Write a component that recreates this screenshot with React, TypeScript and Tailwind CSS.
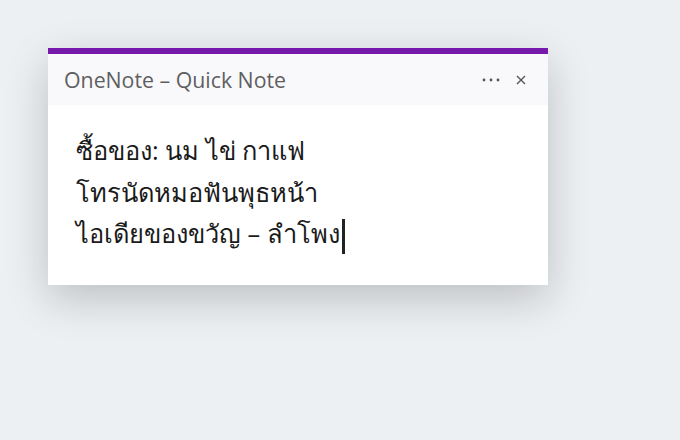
import React from "react";

export default function App() {
  return (
    <div className="w-[680px] h-[440px] bg-[#edf0f3] pt-[48px] pl-[48px]" style={{ fontFamily: '"Segoe UI", "Open Sans", "Noto Sans", sans-serif' }}>
      <div className="w-[500px] bg-white shadow-[0_14px_40px_rgba(0,0,0,0.2)] flex flex-col">
        <div className="h-[6px] bg-[#7719aa]" />
        <div className="h-[51px] bg-[#f9f9fc] flex items-center justify-between pl-[16px] pr-[22px]">
          <span className="text-[21.3px] text-[#5f5f5f] mt-[1px]">OneNote – Quick Note</span>
          <div className="flex items-center gap-[16px] text-[#555]">
            <svg width="18" height="4" viewBox="0 0 18 4"><circle cx="2" cy="2" r="1.4" fill="#555" /><circle cx="9" cy="2" r="1.4" fill="#555" /><circle cx="16" cy="2" r="1.4" fill="#555" /></svg>
            <svg width="10" height="10" viewBox="0 0 10 10"><path d="M1 1L9 9M9 1L1 9" stroke="#555" strokeWidth="1.4" /></svg>
          </div>
        </div>
        <div className="h-[180px] pl-[28px] pt-[25px] text-[25.4px] leading-[41.5px] text-[#1a1a1a]">
          <div>ซื้อของ: นม ไข่ กาแฟ</div>
          <div>โทรนัดหมอฟันพุธหน้า</div>
          <div className="flex items-center">ไอเดียของขวัญ – ลำโพง<span className="inline-block w-[3px] h-[35px] bg-[#222] ml-[2px] translate-y-[3px]" /></div>
        </div>
      </div>
    </div>
  );
}
